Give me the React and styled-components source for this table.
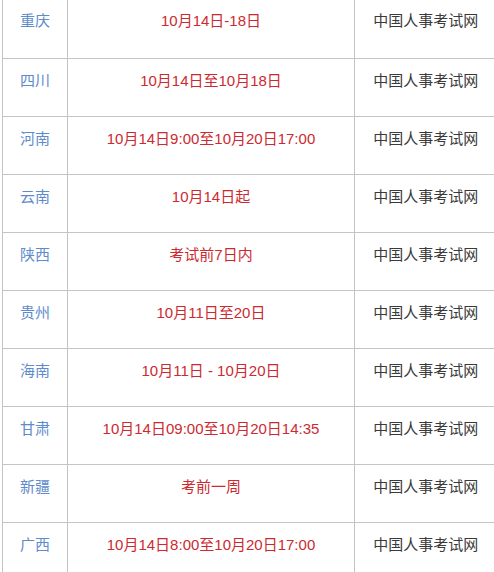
import React from 'react'
import styled, { createGlobalStyle } from 'styled-components'

const GlobalStyle = createGlobalStyle`
body {
    margin: 0;
    background: #fff;
    overflow: hidden;
}
`

const rows = [
    { province: '重庆', date: '10月14日-18日' },
    { province: '四川', date: '10月14日至10月18日' },
    { province: '河南', date: '10月14日9:00至10月20日17:00' },
    { province: '云南', date: '10月14日起' },
    { province: '陕西', date: '考试前7日内' },
    { province: '贵州', date: '10月11日至20日' },
    { province: '海南', date: '10月11日 - 10月20日' },
    { province: '甘肃', date: '10月14日09:00至10月20日14:35' },
    { province: '新疆', date: '考前一周' },
    { province: '广西', date: '10月14日8:00至10月20日17:00' },
]

const App = () => {
    return (
        <>
            <GlobalStyle />
            <Wrap>
                <Table>
                    <colgroup>
                        <col style={{ width: 65 }} />
                        <col style={{ width: 287 }} />
                        <col style={{ width: 142 }} />
                    </colgroup>
                    <tbody>
                        {rows.map((r) => (
                            <Row key={r.province}>
                                <Cell color="#5e8ccb">{r.province}</Cell>
                                <Cell color="#cc2a30">{r.date}</Cell>
                                <Cell color="#3a3a3a">中国人事考试网</Cell>
                            </Row>
                        ))}
                    </tbody>
                </Table>
            </Wrap>
        </>
    )
}

export default App

const Wrap = styled.div`
padding-left: 2px;
`

const Table = styled.table`
border-collapse: collapse;
table-layout: fixed;
width: 494px;
font-family: "Liberation Sans", "Noto Sans CJK SC", sans-serif;
font-size: 15px;
`

const Row = styled.tr`
height: 58px;
&:first-child td {
    border-top: none;
    padding-top: 11px;
}
`

const Cell = styled.td`
border: 1px solid #c4c4c4;
color: ${props => props.color};
text-align: center;
vertical-align: top;
padding: 12px 0 0;
line-height: 20px;
white-space: nowrap;
&:last-child {
    border-right: none;
}
`
